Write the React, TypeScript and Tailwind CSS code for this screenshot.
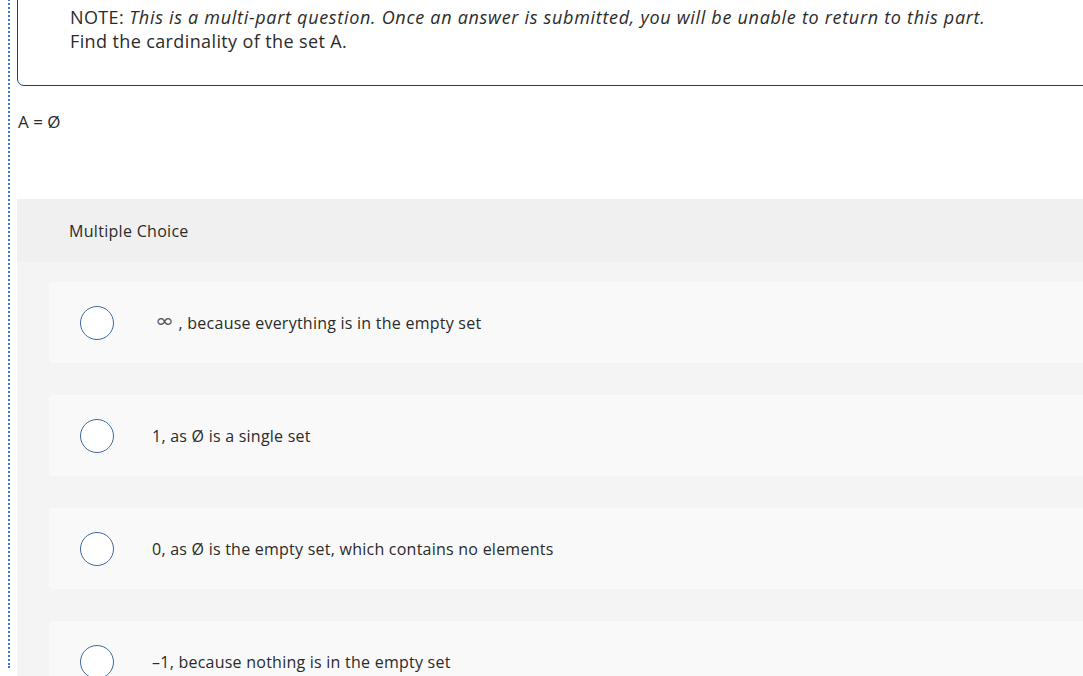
const options = [
  { label: " , because everything is in the empty set", infinity: true },
  { label: "1, as Ø is a single set" },
  { label: "0, as Ø is the empty set, which contains no elements" },
  { label: "–1, because nothing is in the empty set" },
];

function RadioOption({ label, infinity }: { label: string; infinity?: boolean }) {
  return (
    <div className="flex h-[81px] items-center rounded-sm bg-[#f9f9f9] pl-[31px]">
      <span className="h-[34px] w-[34px] shrink-0 rounded-full border border-[#3d6a9e] bg-white" />
      <span className="ml-[38px] whitespace-pre text-[16px] tracking-[0.24px] text-[#2b2b2b]">
        {infinity && (
          <span className="ml-[3px] inline-block scale-y-[0.8] font-['DejaVu_Sans',sans-serif] text-[23px] leading-none tracking-normal text-[#555]">
            ∞
          </span>
        )}
        {label}
      </span>
    </div>
  );
}

export default function App() {
  return (
    <div className="h-[676px] w-[1083px] overflow-hidden bg-white font-['Open_Sans','Liberation_Sans',sans-serif] text-[#2b2b2b]">
      <div className="ml-2 h-full border-l-2 border-dotted border-[#3a74c4] pl-[7px]">
        <div className="-mr-6 -mt-2 rounded-bl-[7px] border border-[#1d3f6e] pt-3 pb-[32px] pl-[52px] text-[18px] leading-6 tracking-[0.38px]">
          <p>
            NOTE: <em className="tracking-[0.7px]">This is a multi-part question. Once an answer is submitted, you will be unable to return to this part.</em>
          </p>
          <p>Find the cardinality of the set A.</p>
        </div>

        <p className="mt-6 pl-px text-[17px] leading-6">A = Ø</p>

        <section className="-mr-6 mt-[65px] rounded-tl-sm bg-[#f4f4f4]">
          <div className="flex h-[63px] items-center bg-[#f0f0f0] pl-[52px] text-[16px] tracking-[0.3px]">
            Multiple Choice
          </div>
          <div className="flex flex-col gap-[32px] pl-[32px] pt-[20px]">
            {options.map((o) => (
              <RadioOption key={o.label} label={o.label} infinity={o.infinity} />
            ))}
          </div>
        </section>
      </div>
    </div>
  );
}
